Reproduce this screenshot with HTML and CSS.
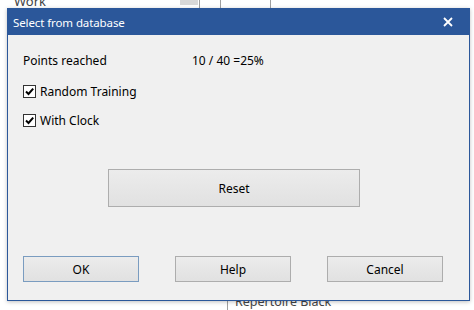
FILE: index.html
```html
<!DOCTYPE html>
<html>
<head>
<meta charset="utf-8">
<link rel="stylesheet" href="styles.css">
</head>
<body>
<div class="desk">
  <div class="bg-top">
    <span class="bg-word">Work</span>
    <span class="bg-grey"></span>
    <span class="bg-line l1"></span>
    <span class="bg-line l2"></span>
    <span class="bg-line l3"></span>
  </div>
  <div class="bg-bottom">
    <span class="bg-line l4"></span>
    <span class="bg-word2">Repertoire Black</span>
  </div>

  <div class="dialog">
    <div class="titlebar">
      <span class="title">Select from database</span>
      <svg class="close" width="10" height="10" viewBox="0 0 10 10">
        <path d="M1 1 L9 9 M9 1 L1 9" stroke="#fff" stroke-width="1.8" fill="none"/>
      </svg>
    </div>
    <div class="content">
      <div class="points">
        <span class="plabel">Points reached</span>
        <span class="pvalue">10 / 40 =25%</span>
      </div>
      <div class="check first">
        <span class="box"><svg width="11" height="11" viewBox="0 0 11 11"><path d="M2 5.5 L4.5 8 L9.2 2.6" stroke="#000" stroke-width="2" fill="none"/></svg></span>
        <span>Random Training</span>
      </div>
      <div class="check second">
        <span class="box"><svg width="11" height="11" viewBox="0 0 11 11"><path d="M2 5.5 L4.5 8 L9.2 2.6" stroke="#000" stroke-width="2" fill="none"/></svg></span>
        <span>With Clock</span>
      </div>
      <div class="reset-row">
        <button class="btn reset">Reset</button>
      </div>
      <div class="footer">
        <button class="btn default">OK</button>
        <button class="btn">Help</button>
        <button class="btn">Cancel</button>
      </div>
    </div>
  </div>
</div>
</body>
</html>
```
FILE: styles.css
```css
html, body {
  margin: 0;
  padding: 0;
  background: #ffffff;
}
.desk {
  position: relative;
  width: 474px;
  height: 310px;
  overflow: hidden;
  font-family: "Noto Sans", "Open Sans", sans-serif;
  font-size: 12px;
  color: #000;
}
.bg-top, .bg-bottom {
  position: absolute;
  left: 0;
  width: 474px;
}
.bg-top { top: 0; height: 10px; }
.bg-bottom { top: 294px; height: 16px; }
.bg-word {
  position: absolute;
  left: 14px;
  top: -8px;
  font-size: 13px;
  color: #444;
}
.bg-word2 {
  position: absolute;
  left: 235px;
  top: -1px;
  font-size: 12.5px;
  color: #444;
}
.bg-grey {
  position: absolute;
  left: 180px;
  top: 0;
  width: 18px;
  height: 5px;
  background: #d8d8d8;
}
.bg-line {
  position: absolute;
  width: 1px;
  background: #a0a0a0;
}
.l1 { left: 199px; top: 0; height: 9px; }
.l2 { left: 220px; top: 0; height: 9px; }
.l3 { left: 270px; top: 0; height: 9px; }
.l4 { left: 227px; top: 0; height: 16px; }

.dialog {
  position: absolute;
  left: 7px;
  top: 8px;
  width: 461px;
  height: 292px;
  border: 1px solid #2b579a;
  border-top: none;
  background: #f0f0f0;
  box-shadow: 0 1px 4px rgba(0, 0, 0, 0.25);
  display: flex;
  flex-direction: column;
}
.titlebar {
  height: 27px;
  margin: 0 -1px;
  background: #2b579a;
  color: #fff;
  display: flex;
  align-items: center;
  justify-content: space-between;
  padding: 0 17px 0 6px;
  flex: none;
}
.title {
  font-size: 11.5px;
  padding-top: 1px;
  letter-spacing: -0.1px;
}
.close { display: block; }

.content {
  flex: 1;
  display: flex;
  flex-direction: column;
  padding: 0 15px;
}
.points {
  margin-top: 13px;
  height: 24px;
  display: flex;
  align-items: center;
  font-size: 12px;
}
.plabel { width: 169px; }
.check {
  display: flex;
  align-items: center;
  height: 24px;
  font-size: 12px;
  gap: 4px;
}
.check.first { margin-top: 7px; }
.check.second { margin-top: 5px; }
.box {
  width: 11px;
  height: 11px;
  border: 1px solid #333;
  background: #fff;
  display: flex;
  align-items: center;
  justify-content: center;
}
.box svg { display: block; }

.reset-row {
  margin-top: 37px;
  padding-left: 85px;
  display: flex;
}
.btn {
  font-family: inherit;
  font-size: 12px;
  color: #000;
  background: linear-gradient(#ececec, #e1e1e1);
  border: 1px solid #adadad;
  border-radius: 0;
  width: 116px;
  height: 26px;
  padding: 0;
  margin: 0;
}
.btn.reset {
  width: 252px;
  height: 38px;
}
.btn.default {
  border-color: #7a9cc0;
}
.footer {
  margin-top: 49px;
  display: flex;
  gap: 36px;
}
```
